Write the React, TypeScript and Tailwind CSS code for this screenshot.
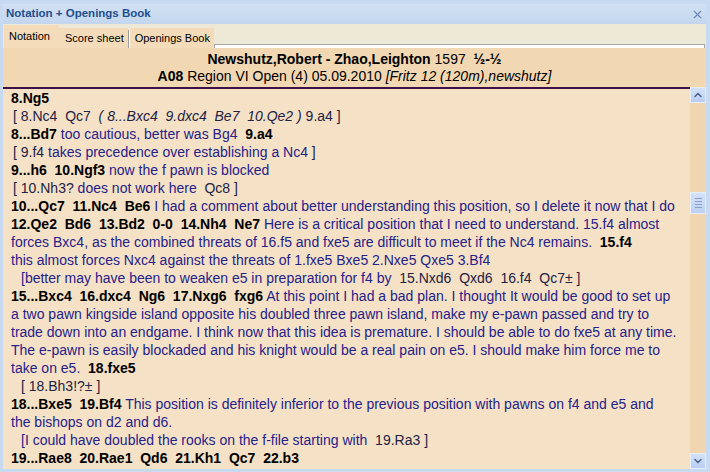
import { ChevronUp, ChevronDown, X } from 'lucide-react';

const font = { fontFamily: '"Liberation Sans", Arial, sans-serif' };

// b = bold move, c = comment (blue), v = variation move (plain), i = italic
type Seg = { t: string; k: 'b' | 'c' | 'v' | 'i' };

const lines: { indent?: number; segs: Seg[] }[] = [
  { segs: [{ t: '8.Ng5', k: 'b' }] },
  {
    indent: 1,
    segs: [
      { t: '[ 8.Nc4\u00a0 Qc7\u00a0 ', k: 'v' },
      { t: '( 8...Bxc4\u00a0 9.dxc4\u00a0 Be7\u00a0 10.Qe2 )', k: 'i' },
      { t: ' 9.a4 ]', k: 'v' },
    ],
  },
  {
    segs: [
      { t: '8...Bd7', k: 'b' },
      { t: ' too cautious, better was Bg4\u00a0 ', k: 'c' },
      { t: '9.a4', k: 'b' },
    ],
  },
  {
    indent: 1,
    segs: [
      { t: '[ 9.f4', k: 'v' },
      { t: ' takes precedence over establishing a Nc4', k: 'c' },
      { t: ' ]', k: 'v' },
    ],
  },
  {
    segs: [
      { t: '9...h6\u00a0 10.Ngf3', k: 'b' },
      { t: ' now the f pawn is blocked', k: 'c' },
    ],
  },
  {
    indent: 1,
    segs: [
      { t: '[ 10.Nh3?', k: 'v' },
      { t: ' does not work here', k: 'c' },
      { t: '\u00a0 Qc8 ]', k: 'v' },
    ],
  },
  {
    segs: [
      { t: '10...Qc7\u00a0 11.Nc4\u00a0 Be6', k: 'b' },
      {
        t: ' I had a comment about better understanding this position, so I delete it now that I do',
        k: 'c',
      },
    ],
  },
  {
    segs: [
      { t: '12.Qe2\u00a0 Bd6\u00a0 13.Bd2\u00a0 0-0\u00a0 14.Nh4\u00a0 Ne7', k: 'b' },
      { t: ' Here is a critical position that I need to understand. 15.f4 almost', k: 'c' },
    ],
  },
  {
    segs: [
      {
        t: 'forces Bxc4, as the combined threats of 16.f5 and fxe5 are difficult to meet if the Nc4 remains.\u00a0 ',
        k: 'c',
      },
      { t: '15.f4', k: 'b' },
    ],
  },
  {
    segs: [
      {
        t: 'this almost forces Nxc4 against the threats of 1.fxe5 Bxe5 2.Nxe5 Qxe5 3.Bf4',
        k: 'c',
      },
    ],
  },
  {
    indent: 2,
    segs: [
      { t: '[better may have been to weaken e5 in preparation for f4 by ', k: 'c' },
      { t: '\u00a015.Nxd6\u00a0 Qxd6\u00a0 16.f4\u00a0 Qc7\u00b1 ]', k: 'v' },
    ],
  },
  {
    segs: [
      { t: '15...Bxc4\u00a0 16.dxc4\u00a0 Ng6\u00a0 17.Nxg6\u00a0 fxg6', k: 'b' },
      { t: ' At this point I had a bad plan. I thought It would be good to set up', k: 'c' },
    ],
  },
  {
    segs: [
      {
        t: 'a two pawn kingside island opposite his doubled three pawn island, make my e-pawn passed and try to',
        k: 'c',
      },
    ],
  },
  {
    segs: [
      {
        t: 'trade down into an endgame. I think now that this idea is premature. I should be able to do fxe5 at any time.',
        k: 'c',
      },
    ],
  },
  {
    segs: [
      {
        t: 'The e-pawn is easily blockaded and his knight would be a real pain on e5. I should make him force me to',
        k: 'c',
      },
    ],
  },
  {
    segs: [
      { t: 'take on e5.\u00a0 ', k: 'c' },
      { t: '18.fxe5', k: 'b' },
    ],
  },
  { indent: 2, segs: [{ t: '[ 18.Bh3!?\u00b1 ]', k: 'v' }] },
  {
    segs: [
      { t: '18...Bxe5\u00a0 19.Bf4', k: 'b' },
      {
        t: ' This position is definitely inferior to the previous position with pawns on f4 and e5 and',
        k: 'c',
      },
    ],
  },
  { segs: [{ t: 'the bishops on d2 and d6.', k: 'c' }] },
  {
    indent: 2,
    segs: [
      { t: '[I could have doubled the rooks on the f-file starting with ', k: 'c' },
      { t: '\u00a019.Ra3 ]', k: 'v' },
    ],
  },
  { segs: [{ t: '19...Rae8\u00a0 20.Rae1\u00a0 Qd6\u00a0 21.Kh1\u00a0 Qc7\u00a0 22.b3', k: 'b' }] },
];

const segClass = {
  b: 'font-bold text-black',
  c: 'text-[#26228a]',
  v: 'text-[#222244]',
  i: 'italic text-[#222244]',
};

const Notation = () => {
  return (
    <div className="flex-1 overflow-hidden pl-[8px]" style={font}>
      {lines.map((line, idx) => (
        <div
          key={idx}
          className={`h-[18px] whitespace-pre text-[14px] leading-[18px] ${
            line.indent === 2 ? 'pl-[10px]' : line.indent === 1 ? 'pl-[2px]' : ''
          }`}
        >
          {line.segs.map((s, j) => (
            <span key={j} className={segClass[s.k]}>
              {s.t}
            </span>
          ))}
        </div>
      ))}
    </div>
  );
};

const ScrollBar = () => (
  <div className="flex w-[16px] flex-col bg-[#efd5b0]">
    <div className="flex h-[16px] items-center justify-center border border-[#e8eef8] bg-gradient-to-b from-[#d5e2f8] to-[#b7cdf2]">
      <ChevronUp size={12} strokeWidth={3} className="text-[#4d6185]" />
    </div>
    <div className="h-[89px]" />
    <div className="flex h-[22px] flex-col items-center justify-center gap-[2px] border border-[#e8eef8] bg-gradient-to-b from-[#d5e2f8] to-[#bcd0f2]">
      <div className="h-[1px] w-[7px] bg-[#8aa0c8]" />
      <div className="h-[1px] w-[7px] bg-[#8aa0c8]" />
      <div className="h-[1px] w-[7px] bg-[#8aa0c8]" />
      <div className="h-[1px] w-[7px] bg-[#8aa0c8]" />
    </div>
    <div className="flex-1" />
    <div className="flex h-[16px] items-center justify-center border border-[#e8eef8] bg-gradient-to-b from-[#d5e2f8] to-[#b7cdf2]">
      <ChevronDown size={12} strokeWidth={3} className="text-[#4d6185]" />
    </div>
  </div>
);

const App = () => {
  return (
    <div
      className="flex h-[472px] w-[710px] flex-col bg-[#c7daf1] pb-[3px] pl-[3px] pr-[4px] pt-[4px]"
      style={font}
    >
      <div className="flex h-[20px] items-center justify-between bg-gradient-to-b from-[#d2e1f4] to-[#c3d6ee] pl-[3px] pr-[2px]">
        <span className="text-[11.5px] font-bold text-[#1f4f8d]">Notation + Openings Book</span>
        <X size={13} strokeWidth={2} className="text-[#6b87b3]" />
      </div>
      <div className="flex h-[24px] items-end bg-[#eee8d7] pl-[1px] text-[11px] text-black">
        <div className="flex h-[23px] items-start bg-[#f4dbb9] pl-[5px] pr-[9px] pt-[3px]">Notation</div>
        <div className="flex h-[20px] items-start bg-[#f4dbb9] pl-[6px] pr-[4px] pt-[2px]">Score sheet</div>
        <div className="h-[18px] w-[1px] bg-[#9a9a9a]" />
        <div className="h-[18px] w-[1px] bg-white" />
        <div className="flex h-[20px] items-start bg-[#f4dbb9] pl-[5px] pr-[4px] pt-[2px]">Openings Book</div>
        <div className="flex-1 self-end">
          <div className="mr-[1px] h-[4px] border border-b-0 border-[#a5a5a5] bg-white" />
        </div>
      </div>
      <div className="flex h-[39px] flex-col items-center justify-center bg-[#f1d7b2] text-[14px] leading-[17px] text-black">
        <div>
          <span className="font-bold">Newshutz,Robert - Zhao,Leighton</span> 1597&nbsp;{' '}
          <span className="font-bold">½-½</span>
        </div>
        <div>
          <span className="font-bold">A08</span> Region VI Open (4) 05.09.2010{' '}
          <span className="italic">[Fritz 12 (120m),newshutz]</span>
        </div>
      </div>
      <div className="flex flex-1 bg-[#f5e1c5]">
        <div className="flex flex-1 flex-col">
          <div className="h-[2px] bg-[#3e1048]" />
          <Notation />
        </div>
        <ScrollBar />
      </div>
    </div>
  );
};

export default App;
